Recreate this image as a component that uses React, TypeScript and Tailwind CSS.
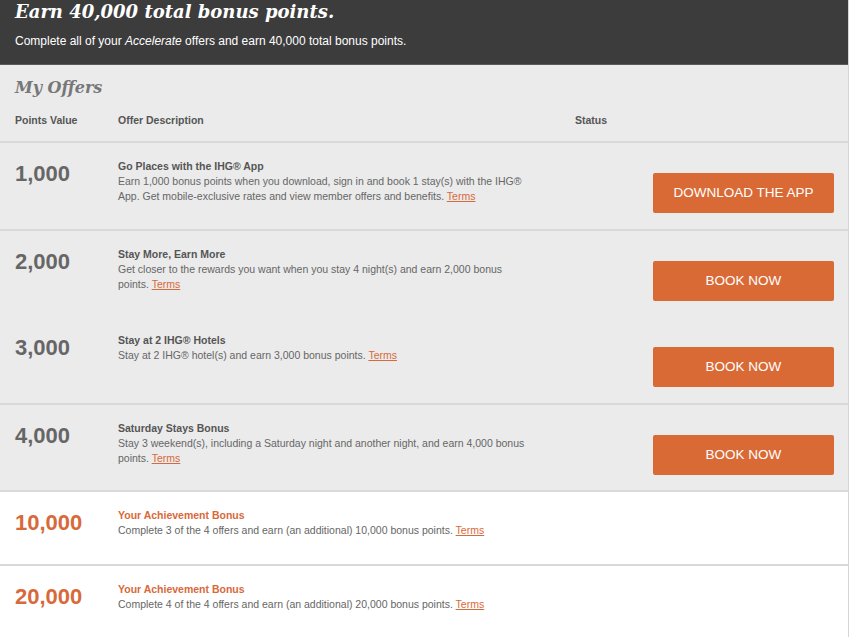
import React from "react";

interface Offer {
  points: string;
  title: string;
  description: string;
  action?: string;
  bonus?: boolean;
  divider: boolean;
  height: string;
}

const offers: Offer[] = [
  {
    points: "1,000",
    title: "Go Places with the IHG® App",
    description:
      "Earn 1,000 bonus points when you download, sign in and book 1 stay(s) with the IHG® App. Get mobile-exclusive rates and view member offers and benefits.",
    action: "DOWNLOAD THE APP",
    divider: true,
    height: "h-[88px]",
  },
  {
    points: "2,000",
    title: "Stay More, Earn More",
    description:
      "Get closer to the rewards you want when you stay 4 night(s) and earn 2,000 bonus points.",
    action: "BOOK NOW",
    divider: false,
    height: "h-[86px]",
  },
  {
    points: "3,000",
    title: "Stay at 2 IHG® Hotels",
    description: "Stay at 2 IHG® hotel(s) and earn 3,000 bonus points.",
    action: "BOOK NOW",
    divider: true,
    height: "h-[88px]",
  },
  {
    points: "4,000",
    title: "Saturday Stays Bonus",
    description:
      "Stay 3 weekend(s), including a Saturday night and another night, and earn 4,000 bonus points.",
    action: "BOOK NOW",
    divider: true,
    height: "h-[87px]",
  },
  {
    points: "10,000",
    title: "Your Achievement Bonus",
    description:
      "Complete 3 of the 4 offers and earn (an additional) 10,000 bonus points.",
    bonus: true,
    divider: true,
    height: "h-[74px]",
  },
  {
    points: "20,000",
    title: "Your Achievement Bonus",
    description:
      "Complete 4 of the 4 offers and earn (an additional) 20,000 bonus points.",
    bonus: true,
    divider: false,
    height: "h-[74px]",
  },
];

const OfferRow = ({ offer }: { offer: Offer }) => (
  <div
    className={`flex ${offer.height} ${offer.bonus ? "bg-white" : "bg-[#ebebeb]"} ${
      offer.divider ? "border-b-2 border-[#d9d9d9]" : ""
    }`}
  >
    <div
      className={`w-[118px] shrink-0 pl-[15px] pt-[18px] text-[22px] font-bold leading-[26px] ${
        offer.bonus ? "text-[#d8693a]" : "text-[#666666]"
      }`}
    >
      {offer.points}
    </div>
    <div className="w-[410px] shrink-0 pt-[16px] text-[10.5px] leading-[15px]">
      <p className={`font-bold ${offer.bonus ? "text-[#d8693a]" : "text-[#555555]"}`}>
        {offer.title}
      </p>
      <p className="text-[#666666]">
        {offer.description}{" "}
        <a href="#" className="text-[#d8693a] underline">
          Terms
        </a>
      </p>
    </div>
    <div className="flex flex-1 justify-end pr-[14px] pt-[30px]">
      {offer.action && (
        <button className="h-[40px] w-[181px] rounded-[2px] bg-[#d96a36] text-[13.5px] text-white">
          {offer.action}
        </button>
      )}
    </div>
  </div>
);

export default function App() {
  return (
    <div className="min-h-[637px] w-[850px] bg-white font-['Liberation_Sans',Arial,sans-serif]">
      <div className="w-[849px] border-r border-[#d6d6d6]">
        <header className="h-[65px] border-b border-[#5a5a5a] bg-[#3c3c3c] px-[15px] pt-0 text-white">
          <h1 className="font-['DejaVu_Serif',Georgia,serif] text-[18px] font-bold italic leading-[24px]">
            Earn 40,000 total bonus points.
          </h1>
          <p className="mt-[9px] text-[12px] leading-[16px]">
            Complete all of your <i>Accelerate</i> offers and earn 40,000 total bonus points.
          </p>
        </header>
        <div className="bg-[#ebebeb]">
          <h2 className="px-[15px] pt-[12px] font-['DejaVu_Serif',Georgia,serif] text-[16px] font-bold italic leading-[22px] text-[#777777]">
            My Offers
          </h2>
          <div className="flex h-[44px] items-start border-b-2 border-[#d9d9d9] pt-[14px] text-[10.5px] font-bold leading-[14px] text-[#555555]">
            <span className="w-[118px] pl-[15px]">Points Value</span>
            <span className="w-[457px]">Offer Description</span>
            <span>Status</span>
          </div>
        </div>
        {offers.map((offer) => (
          <OfferRow key={offer.points} offer={offer} />
        ))}
      </div>
    </div>
  );
}
